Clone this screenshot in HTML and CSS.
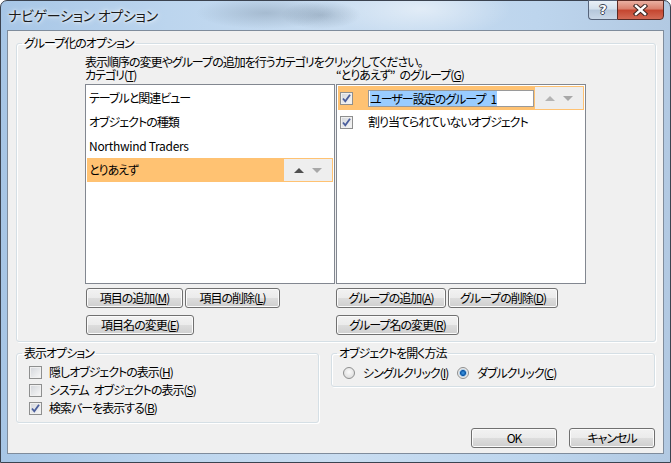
FILE: index.html
```html
<!DOCTYPE html>
<html>
<head>
    <meta charset="UTF-8">
    <title>ナビゲーション オプション</title>
    <link rel="stylesheet" href="styles.css">
</head>
<body>
    <div class="win">
        <div class="titlebar">
            <span class="title">ナビゲーション オプション</span>
            <div class="caps">
                <span class="cap help">?</span>
                <span class="cap close">
                    <svg width="15" height="12" viewBox="0 0 15 12"><path d="M3 2L12 10M12 2L3 10" stroke="#3a2420" stroke-width="4.4" stroke-linecap="square" fill="none"/><path d="M3 2L12 10M12 2L3 10" stroke="#fff" stroke-width="2.4" stroke-linecap="square" fill="none"/></svg>
                </span>
            </div>
        </div>
        <div class="client">
            <fieldset class="grp grpMain">
                <legend>グループ化のオプション</legend>
                <div class="mainIn">
                    <p class="hint">表示順序の変更やグループの追加を行うカテゴリをクリックしてください。</p>
                    <div class="cols">
                        <div class="lbl">カテゴリ(<u>T</u>)</div>
                        <div class="lbl">“とりあえず”&ensp;のグループ(<u>G</u>)</div>
                        <ul class="list">
                            <li class="row"><span class="txt">テーブルと関連ビュー</span></li>
                            <li class="row"><span class="txt">オブジェクトの種類</span></li>
                            <li class="row"><span class="txt latin">Northwind Traders</span></li>
                            <li class="row sel">
                                <span class="txt">とりあえず</span>
                                <span class="arrows">
                                    <svg width="10" height="5" viewBox="0 0 10 5"><polygon points="0,5 10,5 5,0" fill="#505050"/></svg>
                                    <svg width="10" height="5" viewBox="0 0 10 5"><polygon points="0,0 10,0 5,5" fill="#a8a8a8"/></svg>
                                </span>
                            </li>
                        </ul>
                        <ul class="list">
                            <li class="row sel">
                                <span class="chk"><svg width="11" height="11" viewBox="0 0 11 11"><path d="M2 5.5L4.3 8.3L9 1.8" stroke="#4a5e9c" stroke-width="1.8" fill="none"/></svg></span>
                                <span class="edit"><span class="mark">ユーザー設定のグループ&ensp;1</span></span>
                                <span class="arrows">
                                    <svg width="10" height="5" viewBox="0 0 10 5"><polygon points="0,5 10,5 5,0" fill="#b4b4b4"/></svg>
                                    <svg width="10" height="5" viewBox="0 0 10 5"><polygon points="0,0 10,0 5,5" fill="#a8a8a8"/></svg>
                                </span>
                            </li>
                            <li class="row">
                                <span class="chk"><svg width="11" height="11" viewBox="0 0 11 11"><path d="M2 5.5L4.3 8.3L9 1.8" stroke="#4a5e9c" stroke-width="1.8" fill="none"/></svg></span>
                                <span class="gtxt">割り当てられていないオブジェクト</span>
                            </li>
                        </ul>
                        <div class="btns left">
                            <button class="btn bAddItem">項目の追加(<u>M</u>)</button>
                            <button class="btn bDelItem">項目の削除(<u>L</u>)</button>
                        </div>
                        <div class="btns">
                            <button class="btn bAddGrp">グループの追加(<u>A</u>)</button>
                            <button class="btn bDelGrp">グループの削除(<u>D</u>)</button>
                        </div>
                        <div class="btns left second">
                            <button class="btn bRenItem">項目名の変更(<u>E</u>)</button>
                        </div>
                        <div class="btns second">
                            <button class="btn bRenGrp">グループ名の変更(<u>R</u>)</button>
                        </div>
                    </div>
                </div>
            </fieldset>
            <div class="lower">
                <fieldset class="grp grpShow">
                    <legend>表示オプション</legend>
                    <div class="showIn">
                        <div class="opt"><span class="chk"></span><span>隠しオブジェクトの表示(<u>H</u>)</span></div>
                        <div class="opt"><span class="chk"></span><span>システム&ensp;オブジェクトの表示(<u>S</u>)</span></div>
                        <div class="opt"><span class="chk"><svg width="11" height="11" viewBox="0 0 11 11"><path d="M2 5.5L4.3 8.3L9 1.8" stroke="#4a5e9c" stroke-width="1.8" fill="none"/></svg></span><span>検索バーを表示する(<u>B</u>)</span></div>
                    </div>
                </fieldset>
                <fieldset class="grp grpOpen">
                    <legend>オブジェクトを開く方法</legend>
                    <div class="openIn">
                        <div class="radio first"><span class="rad"></span><span>シングルクリック(<u>I</u>)</span></div>
                        <div class="radio"><span class="rad on"></span><span>ダブルクリック(<u>C</u>)</span></div>
                    </div>
                </fieldset>
            </div>
            <div class="foot">
                <button class="btn bFoot">OK</button>
                <button class="btn bFoot">キャンセル</button>
            </div>
        </div>
    </div>
</body>
</html>
```

FILE: styles.css
```css
*{padding:0;margin:0;box-sizing:border-box}
body{width:671px;height:463px;overflow:hidden;background:#fff;font:12px/14px "Noto Sans CJK JP",sans-serif;font-feature-settings:"palt";letter-spacing:-1px;color:#000}
ul>li{list-style:none}
u{text-decoration:underline;text-underline-offset:1px}

.win{width:671px;height:463px;border:1px solid #3b4350;border-radius:7px 7px 0 0;padding:0 6px 8px 6px;display:flex;flex-direction:column;
  background:
    radial-gradient(ellipse 70px 16px at 265px 12px,rgba(110,130,150,.35),transparent),
    radial-gradient(ellipse 40px 14px at 320px 14px,rgba(90,110,130,.3),transparent),
    radial-gradient(ellipse 90px 30px at 420px 8px,rgba(255,255,255,.5),transparent),
    linear-gradient(90deg,#a7c6e6 0%,#bcd5ee 25%,#c9ddf1 50%,#bdd5ed 80%,#b2c9e2 100%)}
.titlebar{height:29px;display:flex;justify-content:space-between;align-items:flex-start}
.title{margin:6px 0 0 1px;font-size:14px;line-height:16px;color:#1b1b1b;letter-spacing:-.3px;text-shadow:0 0 6px #fff,0 0 3px #fff}
.caps{display:flex;margin-top:-1px}
.cap{height:20px;display:flex;align-items:center;justify-content:center;border:1px solid #56647a}
.help{width:29px;border-right:none;border-radius:0 0 0 4px;background:linear-gradient(#e9f0f7,#d3e0ed 45%,#b5c7db 50%,#c9d8e8);font:bold 13px/16px "DejaVu Sans",sans-serif;letter-spacing:0;color:#fff;text-shadow:1px 0 #3c4656,-1px 0 #3c4656,0 1px #3c4656,0 -1px #3c4656}
.close{width:47px;border-color:#5a2a24;border-radius:0 0 4px 0;background:linear-gradient(#eab0a2,#d97f6c 45%,#c5452f 50%,#d36a55)}

.client{flex:1;border:1px solid #7f8c9c;background:#f0f0f0;display:flex;flex-direction:column}
.grp{border:1px solid #d5dfe5;border-radius:3px;box-shadow:inset 1px 1px #fff,1px 1px #fff;min-width:0}
.grp legend{margin-left:5px;padding:0 2px;line-height:14px}
.grpMain{margin:5px 7px 0 8px}
.mainIn{padding:5px 0 6px 68px}
.hint{line-height:13px}
.cols{display:grid;grid-template-columns:250px 250px;column-gap:1px}
.lbl{line-height:13px}
.list{height:200px;margin-top:3px;border:1px solid #828790;background:#fff;padding:1px}
.row{height:24px;display:flex;align-items:center}
.row .txt{padding-left:2px}
.row .latin{letter-spacing:-.3px}
.sel{background:#ffc272}
.arrows{margin-left:auto;width:50px;height:24px;border:1px solid #ffc272;background:#eeeeee;display:flex;align-items:center;justify-content:space-around;padding:0 6px}
.chk{width:13px;height:13px;flex:none;border:1px solid #8e8f8f;background:linear-gradient(135deg,#d2d5da,#f8f8f8);box-shadow:inset 0 0 0 1px #f0f0f0;display:flex;align-items:center;justify-content:center}
.row .chk{margin-left:2px}
.edit{margin-left:15px;width:167px;height:17px;border:1px solid #9a9a9a;background:#fff;display:flex;align-items:center;padding-left:1px}
.mark{background:#99ccff;line-height:15px;padding-right:1px}
.gtxt{margin-left:15px}
.btns{display:flex;gap:2px;margin-top:4px}
.btns.left{padding-left:1px}
.btns.second{margin-top:7px}
.btn{height:20px;border:1px solid #707070;border-radius:3px;background:linear-gradient(#f2f2f2,#ebebeb 50%,#dddddd 50%,#cfcfcf);box-shadow:inset 0 0 0 1px #fbfbfb;font:inherit;font-feature-settings:"palt";letter-spacing:-1px;line-height:16px;color:#000}
.bAddItem{width:97px}
.bDelItem{width:95px}
.bAddGrp{width:110px}
.bDelGrp{width:110px}
.bRenItem{width:108px}
.bRenGrp{width:123px}

.lower{display:flex;align-items:flex-start;margin-top:4px}
.grpShow{margin-left:8px;width:303px}
.grpOpen{margin-left:12px;width:324px}
.showIn{padding:3px 0 5px 12px}
.opt{height:18px;display:flex;align-items:center;gap:7px;white-space:nowrap}
.openIn{padding:3px 0 4px 11px;display:flex}
.radio{height:19px;display:flex;align-items:center;gap:8px;white-space:nowrap}
.radio.first{width:114px}
.rad{width:12px;height:12px;flex:none;border-radius:50%;border:1px solid #8e8f8f;background:radial-gradient(circle at 50% 40%,#fbfbfb,#d6d6d6)}
.rad.on{background:radial-gradient(circle at 50% 50%,#3f9be6 0,#0d57a6 2.6px,#a8cbe9 3.4px,#e6e6e6 4.2px,#fafafa 6px)}
.foot{display:flex;justify-content:flex-end;gap:12px;margin:5px 8px 0 0}
.bFoot{width:86px}
```
